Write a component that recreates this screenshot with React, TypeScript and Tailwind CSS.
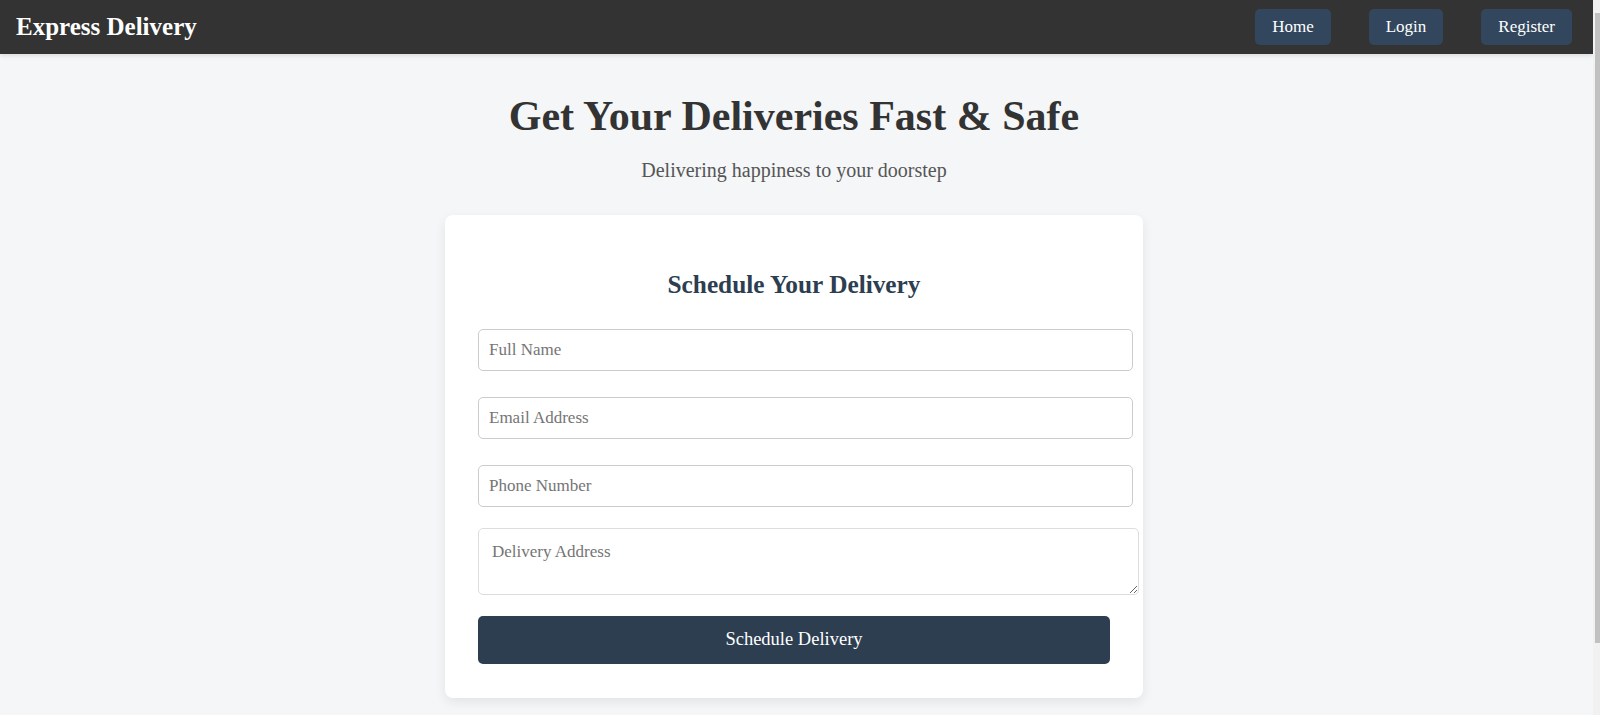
import { useState } from "react"

export default function App() {
  const [name, setName] = useState("")
  const [email, setEmail] = useState("")
  const [phone, setPhone] = useState("")
  const [address, setAddress] = useState("")

  const handleSubmit = (e: any) => {
    e.preventDefault()
  }

  return (
    <div className="min-h-screen bg-[#f4f6f8] pr-[7px] font-['Liberation_Serif','Times_New_Roman',serif]">
      <nav className="flex h-[54px] items-center justify-between bg-[#333] pl-4 pr-[21px] shadow-[0_2px_4px_rgba(0,0,0,0.1)]">
        <span className="text-[25px] font-bold text-white">Express Delivery</span>
        <div className="flex gap-[38px]">
          <a href="#" className="flex h-9 items-center rounded-[5px] bg-[#32475d] px-[17px] text-[17px] text-white">Home</a>
          <a href="#" className="flex h-9 items-center rounded-[5px] bg-[#32475d] px-[17px] text-[17px] text-white">Login</a>
          <a href="#" className="flex h-9 items-center rounded-[5px] bg-[#32475d] px-[17px] text-[17px] text-white">Register</a>
        </div>
      </nav>

      <main className="flex flex-col items-center pb-10 pr-[5px]">
        <h1 className="mt-[38px] text-[42px] font-bold leading-[48px] text-[#333]">Get Your Deliveries Fast &amp; Safe</h1>
        <p className="mt-[19px] text-[20px] leading-[23px] text-[#555]">Delivering happiness to your doorstep</p>

        <form onSubmit={handleSubmit} className="mt-[33px] w-[698px] rounded-[8px] bg-white px-[33px] pb-[34px] pt-[55px] shadow-[0_4px_12px_rgba(0,0,0,0.08)]">
          <h2 className="text-center text-[25.3px] font-bold leading-[28px] text-[#2c3e50]">Schedule Your Delivery</h2>
          <input
            type="text"
            placeholder="Full Name"
            value={name}
            onChange={(e) => setName(e.target.value)}
            className="mt-[31px] block h-[42px] w-[655px] rounded-[5px] border border-[#ccc] px-[10px] text-[17px] text-[#333] outline-none placeholder:text-[#757575]"
          />
          <input
            type="email"
            placeholder="Email Address"
            value={email}
            onChange={(e) => setEmail(e.target.value)}
            className="mt-[26px] block h-[42px] w-[655px] rounded-[5px] border border-[#ccc] px-[10px] text-[17px] text-[#333] outline-none placeholder:text-[#757575]"
          />
          <input
            type="tel"
            placeholder="Phone Number"
            value={phone}
            onChange={(e) => setPhone(e.target.value)}
            className="mt-[26px] block h-[42px] w-[655px] rounded-[5px] border border-[#ccc] px-[10px] text-[17px] text-[#333] outline-none placeholder:text-[#757575]"
          />
          <textarea
            placeholder="Delivery Address"
            value={address}
            onChange={(e) => setAddress(e.target.value)}
            className="mt-[21px] block h-[67px] w-[661px] rounded-[5px] border border-[#ddd] p-[13px] text-[17px] leading-[19px] text-[#333] outline-none placeholder:text-[#757575]"
          />
          <button type="submit" className="mt-[21px] block h-12 w-[632px] rounded-[5px] bg-[#2c3e50] text-[18.5px] text-white">
            Schedule Delivery
          </button>
        </form>
      </main>

      {/* browser scrollbar edge */}
      <div className="fixed right-0 top-0 flex h-full w-[7px] flex-col bg-[#f1f1f1] pl-[2px] pt-[13px]">
        <div className="h-[630px] bg-[#c1c1c1]" />
      </div>
    </div>
  )
}
